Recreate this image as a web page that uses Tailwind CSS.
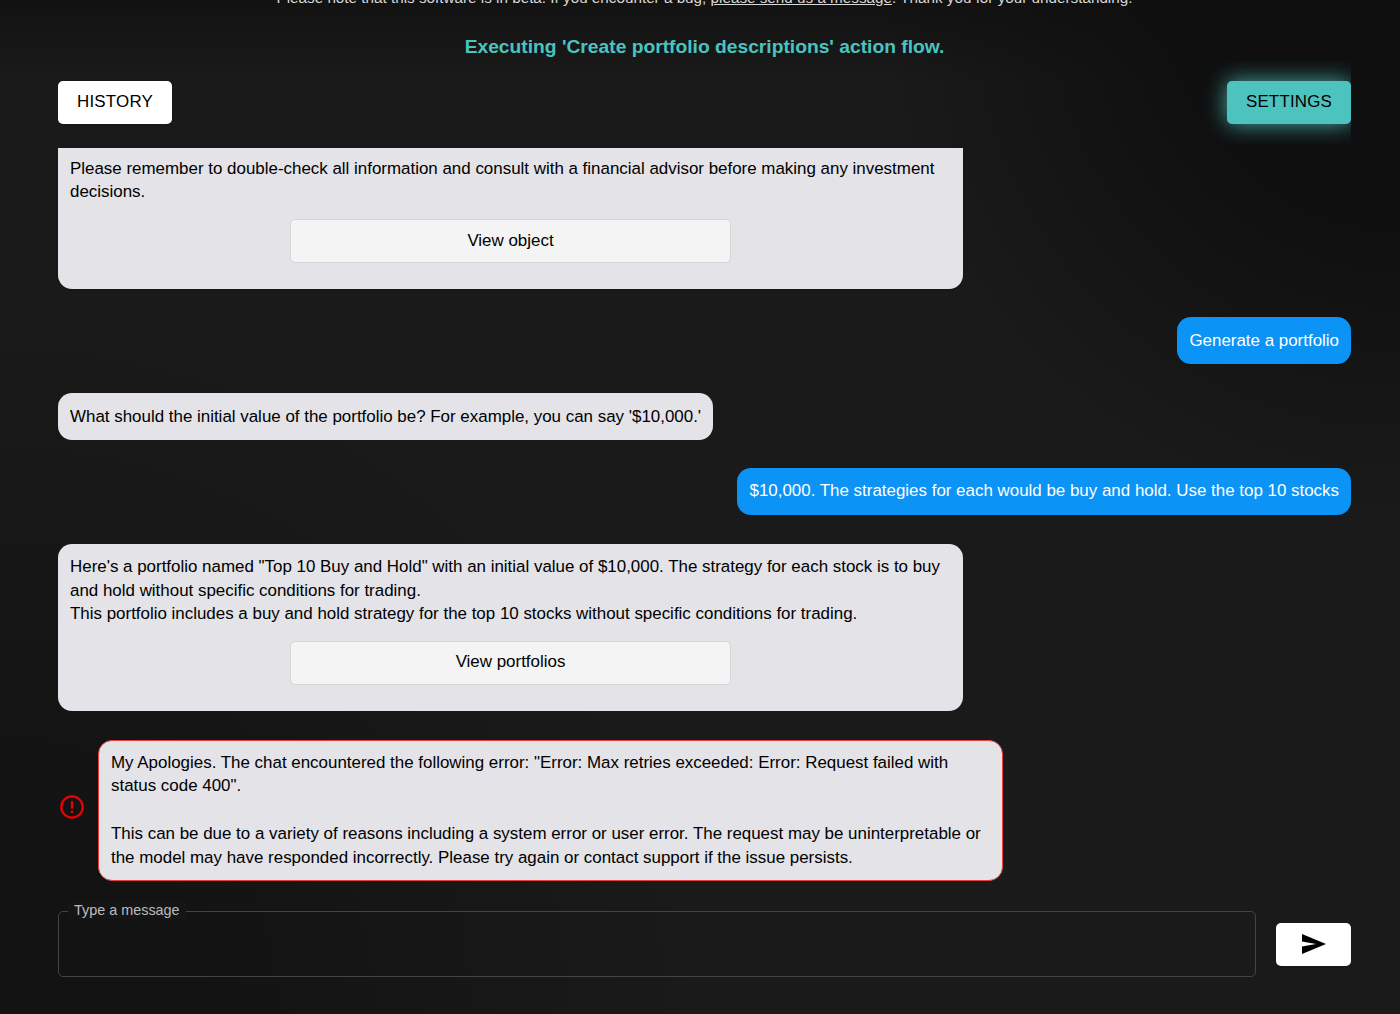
<!DOCTYPE html>
<html lang="en">
<head>
  <meta charset="UTF-8">
  <meta name="viewport" content="width=device-width, initial-scale=1">
  <title>Chat</title>
  <script src="https://cdn.jsdelivr.net/npm/@tailwindcss/browser@4"></script>
</head>
<body class="h-[1014px] overflow-hidden bg-[#1a1a1a] bg-[radial-gradient(circle_520px_at_100%_0%,#0f0f0f_40%,transparent_100%),radial-gradient(circle_700px_at_0%_100%,#131313_30%,transparent_100%),linear-gradient(to_bottom,#121212,transparent_80px)] font-['Liberation_Sans',Arial,sans-serif] text-[16.93px] text-black">
  <div class="flex h-full flex-col pl-[58px] pr-[49px]">
    <p class="-mt-[10px] text-center text-[15.25px] leading-[16px] text-[#d8d8d8]">Please note that this software is in beta. If you encounter a bug, <a href="#" class="underline">please send us a message</a>. Thank you for your understanding.</p>
    <h2 class="mt-[27px] text-center text-[19.24px] leading-[27px] font-bold text-[#4ac4c0]">Executing 'Create portfolio descriptions' action flow.</h2>

    <div class="flex items-center justify-between overflow-hidden py-[21px]">
      <button class="h-[43px] w-[114px] rounded-[5px] bg-white pb-[2px] text-[16.93px] tracking-[0.2px] shadow-sm">HISTORY</button>
      <button class="h-[43px] w-[124px] rounded-[5px] bg-[#4dc3c0] pb-[2px] text-[16.93px] tracking-[0.2px] shadow-[0_0_22px_#4dc3c0dd]">SETTINGS</button>
    </div>

    <div class="mt-[3px] flex flex-col">
      <div class="w-[905px] rounded-b-[14px] bg-[#e3e3e8] px-3 pt-[9px] pb-[26px] leading-[23px] shadow-sm">
        <p>Please remember to double-check all information and consult with a financial advisor before making any investment decisions.</p>
        <button class="mx-auto mt-[16px] block h-[44px] w-[441px] rounded-[5px] border border-[#d6d6d6] bg-[#f4f4f4] pb-[2px]">View object</button>
      </div>

      <div class="mt-[28px] self-end rounded-[14px] bg-[#0b93f6] px-3 py-[12px] leading-[23px] text-white">Generate a portfolio</div>

      <div class="mt-[29px] self-start rounded-[14px] bg-[#e3e3e8] px-3 py-[12px] leading-[23px]">What should the initial value of the portfolio be? For example, you can say '$10,000.'</div>

      <div class="mt-[28px] self-end rounded-[14px] bg-[#0b93f6] px-3 py-[12px] pb-[13px] leading-[22px] text-white">$10,000. The strategies for each would be buy and hold. Use the top 10 stocks</div>

      <div class="mt-[29px] w-[905px] rounded-[14px] bg-[#e3e3e8] px-3 pt-[11px] pb-[26px] leading-[23.5px]">
        <p>Here's a portfolio named "Top 10 Buy and Hold" with an initial value of $10,000. The strategy for each stock is to buy and hold without specific conditions for trading.</p>
        <p>This portfolio includes a buy and hold strategy for the top 10 stocks without specific conditions for trading.</p>
        <button class="mx-auto mt-[15px] block h-[44px] w-[441px] rounded-[5px] border border-[#d6d6d6] bg-[#f4f4f4] pb-[2px]">View portfolios</button>
      </div>

      <div class="mt-[29.5px] flex items-center">
        <svg class="mb-[8px] ml-[2px] h-[24px] w-[24px] shrink-0" viewBox="0 0 24 24" fill="none">
          <circle cx="12" cy="12" r="10.7" stroke="#ee0000" stroke-width="2.2"/>
          <path d="M12 6.2v7.3" stroke="#ee0000" stroke-width="2.4"/>
          <path d="M12 15.6v2.4" stroke="#ee0000" stroke-width="2.4"/>
        </svg>
        <div class="ml-[14px] w-[905px] rounded-[14px] border border-[#e8413c] bg-[#e3e3e8] px-3 py-[10px]">
          <p class="leading-[23px]">My Apologies. The chat encountered the following error: "Error: Max retries exceeded: Error: Request failed with status code 400".</p>
          <p class="mt-[25px] leading-[24px]">This can be due to a variety of reasons including a system error or user error. The request may be uninterpretable or the model may have responded incorrectly. Please try again or contact support if the issue persists.</p>
        </div>
      </div>
    </div>

    <div class="mt-[30px] flex items-center gap-[20px]">
      <div class="relative h-[66px] flex-1 rounded-[5px] border border-[#444444]">
        <span class="absolute -top-[11px] left-[9px] bg-[#151515] px-[6px] text-[14.4px] leading-[18px] text-[#bdbdbd]">Type a message</span>
      </div>
      <button class="flex h-[43px] w-[75px] items-center justify-center rounded-[5px] bg-white shadow-sm">
        <svg class="h-[22px] w-[26px]" viewBox="0 0 26 22" fill="#000"><path d="M1 1L25 11L1 21V13.5L15 11L1 8.5Z"/></svg>
      </button>
    </div>
  </div>
</body>
</html>
